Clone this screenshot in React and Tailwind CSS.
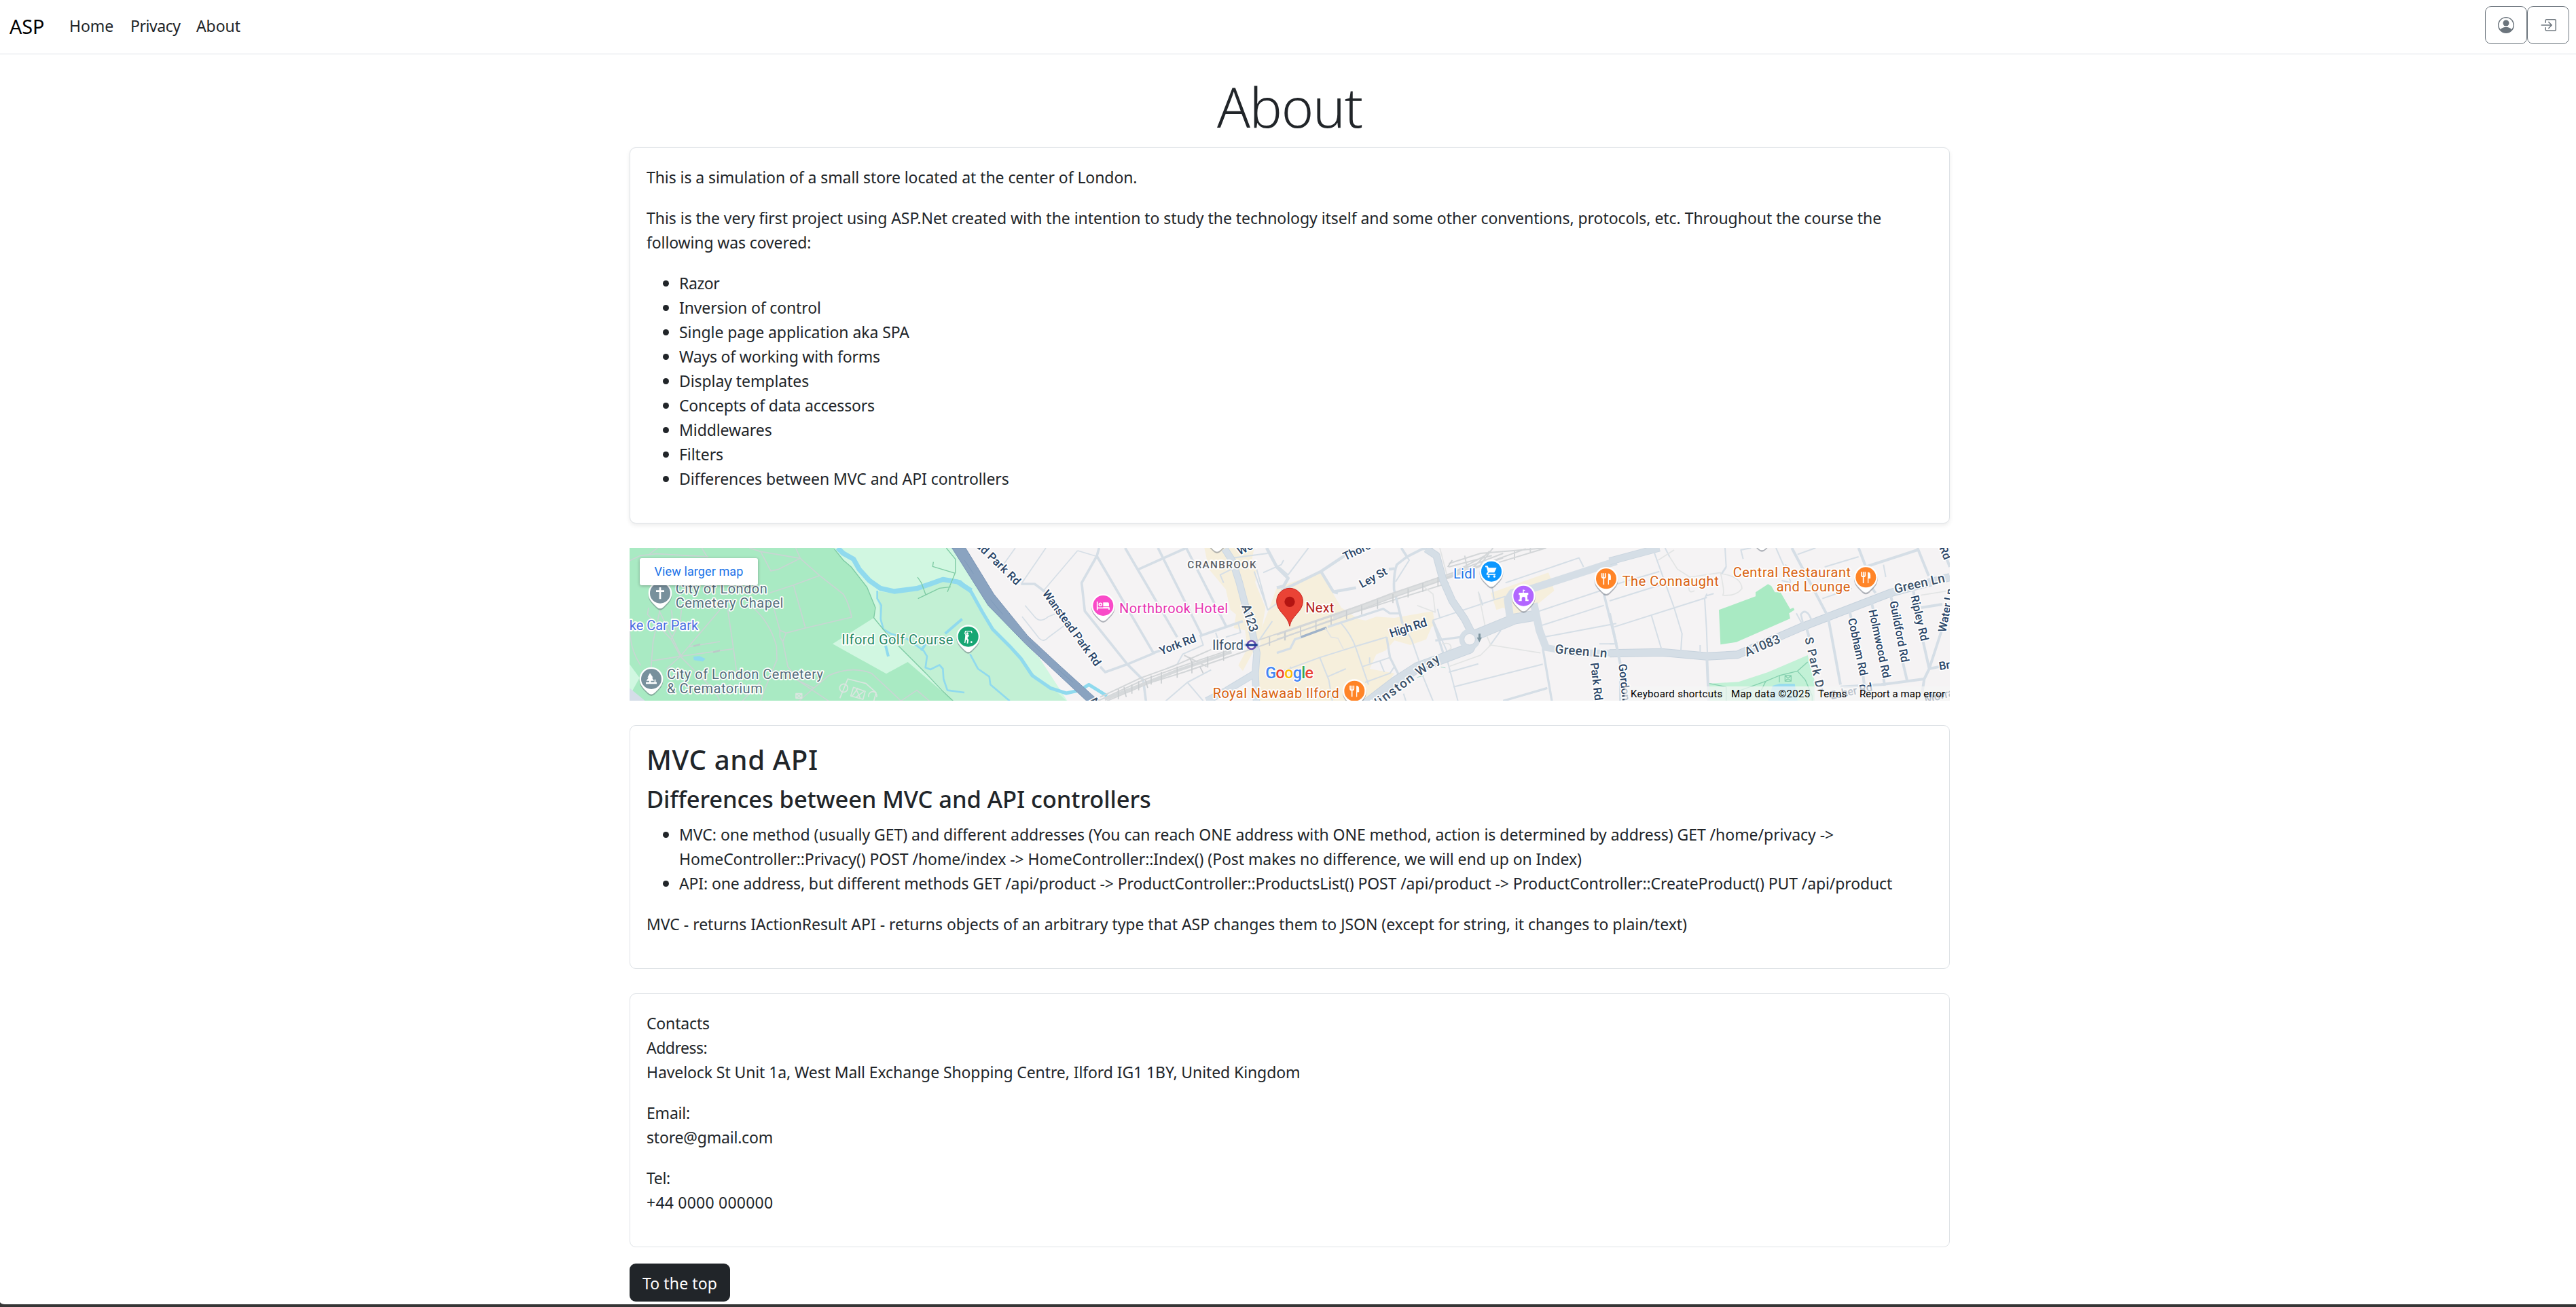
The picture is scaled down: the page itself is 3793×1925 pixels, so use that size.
import { BsPersonCircle, BsBoxArrowInRight } from "react-icons/bs";

const GLYPHS = {
  cross: <path d="M0-26V26M-18-9H18" stroke="#fff" strokeWidth="8" />,
  tree: <path d="M-6-26L8-6H3L12 8H-2V14H14V2H19V14H24V22H-24V14H-9V8H-22L-12-6H-17Z" fill="#fff" />,
  golf: (
    <g fill="none" stroke="#fff" strokeWidth="4">
      <path d="M16-16L14-24H-12L-15-14L-10-8" />
      <circle cx="-4" cy="-14" r="5" fill="#fff" stroke="none" />
      <path d="M-13-8L-1-10L4-4L-4 6L2 14L-1 30H-6L-5 17L-10 12L-13 28H-17L-14 4Z" fill="#fff" stroke="none" />
      <circle cx="14" cy="24" r="4" fill="#fff" stroke="none" />
    </g>
  ),
  bed: (
    <g fill="none" stroke="#fff" strokeWidth="5">
      <path d="M-26-18V20M-26 10H26V18" />
      <circle cx="-12" cy="-5" r="6" />
      <path d="M0-14H22Q26-14 26-6V10H0Z" fill="#fff" stroke="none" />
      <path d="M-22 5H26" stroke="#f743c8" strokeWidth="3" />
    </g>
  ),
  cart: (
    <g fill="#fff">
      <path d="M-27-25H-17L-12-16H23L13 5H-11L-15 10H18V15H-20Q-24 14-22 9L-16 2L-22-19H-27Z" />
      <circle cx="-12" cy="22" r="5" />
      <circle cx="13" cy="22" r="5" />
    </g>
  ),
  castle: (
    <path
      d="M-3-28L8-25L1-21V-14H21V-4H17V16H22V23H8V12Q8 4 0 4Q-8 4-8 12V23H-22V16H-17V-4H-21V-14H-3Z"
      fill="#fff"
    />
  ),
  food: (
    <g fill="none" stroke="#fff" strokeWidth="5">
      <path d="M-19-24V-10Q-19-3-11-3Q-3-3-3-10V-24M-11-24V26" />
      <path d="M10 26V-22Q19-22 19-10V4H10Z" fill="#fff" strokeWidth="3" />
    </g>
  ),
};

function Pin({ x, y, color, glyph }) {
  return (
    <g transform={`translate(${x} ${y})`}>
      <path d="M-52 2A52 52 0 1 1 52 2C52 28 36 42 16 62Q0 78-16 62C-36 42-52 28-52 2Z" fill="#5b6470" opacity=".45" transform="translate(0 5)" />
      <path d="M-52 0A52 52 0 1 1 52 0C52 26 36 40 16 60Q0 76-16 60C-36 40-52 26-52 0Z" fill="#fff" />
      <circle r="45" fill={color} />
      {GLYPHS[glyph]}
    </g>
  );
}

function Label({ x, y, w, color = "#2f4a68", size = 60, rotate = 0, weight = 400, anchor, children }) {
  return (
    <text
      transform={`translate(${x} ${y}) rotate(${rotate})`}
      fontFamily="Roboto, sans-serif"
      fontSize={size}
      fontWeight={weight}
      fill={color}
      stroke="#fff"
      strokeWidth="10"
      strokeLinejoin="round"
      paintOrder="stroke"
      textAnchor={anchor}
      textLength={w}
    >
      {children}
    </text>
  );
}

function Roads({ d, w = 9, color = "#d5dee6" }) {
  return <path d={d} fill="none" stroke={color} strokeWidth={w} strokeLinejoin="round" />;
}

function MapTerrain() {
  return (
    <>
      <rect width="5900" height="760" fill="#f5f3f4" />
      <path d="M0 0H1420L1500 110L1590 260L1740 430L1830 520L1960 720H0Z" fill="#d1f7e1" />
      <path d="M1115 228L1190 236L1290 225L1400 178L1470 186L1530 225L1560 300L1610 380L1700 470L1760 540L1830 620L1900 665L1960 720H1450L1400 665L1330 590L1170 430L1130 370Z" fill="#c2f0d4" />
      <path d="M0 0H925V40L965 90L1000 120L1070 210L1107 300L1100 345L918 460L1155 592L1250 540L1450 712H0Z" fill="#a9eac3" />
      <path d="M21 550L65 610L21 690Z" fill="#d1f7e1" />
      <path d="M21 655L90 712H21Z" fill="#d5dde8" />
      <path d="M303 516L330 514L356 526L345 538L305 532Z" fill="#90daee" />
      <Roads w={5} color="#c9d5d3" d="M21 92L70 70L140 62L370 75M110 62L145 36M550 36L600 52L775 82M600 52L645 138L680 130L775 82L755 36M775 82L860 158L745 200L640 235M745 200L798 390M860 158L965 240Q990 280 1002 342L798 390L712 412L685 400L655 290M560 295Q640 360 670 470L672 530L610 680L600 712M712 412L698 450L720 560L770 625L900 712M698 450L685 430V400M720 600L835 655L770 712M835 655L900 600Q1000 555 1090 590L1220 712L1290 665L1345 712M420 310L245 515L118 535L125 450L155 310M118 535L115 600M245 515L480 482L455 310M245 515L205 440L100 330L105 300M245 515L185 570M245 515L400 670L420 712M480 482L495 590M21 380Q20 480 70 555M250 310L245 360L205 440M205 310Q215 350 200 380M285 472L420 450M155 320L250 515M340 36L365 78M520 712L600 625" />
      <Roads w={8} color="#bbc9c8" d="M303 470L333 462M390 497L420 489" />
      <Roads w={5} color="#dbe5e0" d="M950 700L985 615L1065 635L1110 675L1100 712M985 655A18 18 0 1 1 949 655A18 18 0 1 1 985 655M1010 652L1062 670L1052 705L998 690ZM1020 655L1040 700M1030 655L1005 690M1055 670L1020 697M1112 695A18 18 0 1 0 1078 695M756 680H782V700H756ZM756 680L782 700M782 680L756 700" />
      <Roads w={22} color="#90daee" d="M940 36L965 60L1010 85L1035 130L1080 180L1130 215L1190 228L1290 215L1350 195L1405 175L1470 186L1530 225" />
      <Roads w={8} color="#90daee" d="M1115 225V260L1133 290L1130 350L1142 395L1175 415L1245 437L1285 465L1320 490L1335 515L1328 565L1350 573L1390 553L1405 570L1408 615L1425 665L1500 675M1525 505L1560 570L1610 605L1615 640L1700 712" />
      <Roads w={12} color="#90daee" d="M1152 468L1164 515M1310 490L1328 460M1415 415L1490 350" />
      <Roads w={15} color="#90daee" d="M1440 180L1480 185L1530 230L1580 320L1625 395L1700 470L1750 525L1800 600L1880 655L1950 678L2010 665L2050 640L2130 690" />
      <Roads w={4} color="#7dcaa3" d="M925 40L965 90L1000 120L1070 210L1107 300L1100 345L1170 430L1330 590L1400 665L1450 712M1420 36L1460 85V145L1425 230M1460 148L1360 118L1363 98M1440 208L1390 214L1295 260M1293 165L1310 190L1330 245" />
    </>
  );
}

function MapCentre() {
  return (
    <g transform="translate(1440 0)">
      <path d="M1120 36H1340L1330 90L1350 140L1345 190L1390 300L1365 440L1290 580L1270 555L1310 480L1300 400L1250 390L1260 330L1235 310L1215 220L1190 190L1140 130Z" fill="#f6efdc" />
      <path d="M1440 212L1640 140L1690 240L1725 300L1800 350L1950 380L2130 320L2140 380L1920 420L1850 570L1960 590L1870 712H1350L1370 400Z" fill="#f6efdc" />
      <Roads w={5} d="M285 36L225 120M420 36L315 190M560 48L640 72M560 48L405 230M328 290L370 340Q395 370 430 340L480 320M315 340L390 435Q410 455 430 432L500 380" />
      <Roads w={11} d="M310 195H370L430 240M655 36L645 72L578 190L592 315L780 550L850 620L862 712M645 72L895 500M770 36L1000 430M915 36L1108 420M1040 36L1215 380M830 130L1040 36M660 560L682 585L780 550L900 500M1100 425L1290 360M895 500L950 480" />
      <Roads w={6} d="M1100 420L1115 465L1025 505L1000 550L955 568M1170 410L1180 440M1270 370L1280 410L1215 430M1045 630L950 712M1045 630L1150 575M1045 630L1115 712M1240 130L1190 155L1205 190M1340 90L1400 310L1500 240M1420 360L1365 440M1340 140L1400 310M1245 80L1400 60M1380 145L1460 110L1470 90" />
      <Roads w={14} d="M1395 36L1440 120L1490 170L1470 205L1440 212" />
      <Roads w={32} color="#cbd7e2" d="M1210 40L1245 95L1275 190L1330 400L1352 500L1345 590L1350 712M1345 590L1220 665L1130 712" />
      <Roads w={26} color="#d7e0e8" d="M1210 40L1245 95L1275 190L1330 400L1352 500L1345 590L1350 712M1345 590L1220 665L1130 712" />
      <path d="M5 36H65L190 240L340 425L480 555L640 700L660 712H600L480 600L330 460L165 290Z" fill="#8aa3c0" stroke="#7893b4" strokeWidth="3" />
      <Roads w={3} color="#7f9bbb" d="M60 90L100 150M175 265L230 330M330 430L400 500M470 570L540 630" />
      <Roads w={6} color="#d3d6d8" d="M650 712L850 620L1000 565L1370 440L1720 320L2150 175M690 712L880 632L1030 585L1380 465L1720 340L2200 190M660 695L840 610L980 560L1150 485M1030 510L1130 560" />
      <Roads w={14} color="#d6d9db" d="M680 705L1000 578L1240 495" />
      <Roads w={5} color="#c9cdd0" d="M740 660V705M765 650L775 695M800 640V680M830 625V665M860 620L870 655M885 600V640M930 585V635M1000 560V610M1065 535V590M1135 515V565M1205 490V535M1408 430V468M1475 405V445M1055 520L1070 555M1100 560L1115 590" />
    </g>
  );
}

function MapEast() {
  return (
    <g transform="translate(2880 0)">
      <path d="M340 375L440 340L520 345L690 315V370L660 440L590 465L520 445L480 490L380 530Z" fill="#f6efdc" />
      <path d="M945 235L1200 145L1210 170L1225 225L1145 290L1050 330L1000 300L970 310Z" fill="#f6efdc" />
      <Roads w={13} d="M20 225L195 140L330 50M195 140L250 230L350 212M250 230L270 235M520 128L495 130" />
      <Roads w={11} d="M550 36L575 75L530 110Q515 150 518 220L555 370M575 75L640 42L690 36M1445 240L1500 460" />
      <Roads w={6} d="M575 75L585 90L525 185M140 36L50 155L10 120M555 370L595 440L628 535M285 370Q330 420 350 480L405 640M350 470L485 430M190 520L350 470M190 520L230 620L245 712M225 605L305 570M0 590L190 520M380 560L500 520M410 545L410 520M455 535L475 585M390 630L500 590L520 560M60 560L75 610M950 200L960 265L1010 250M960 265L690 355L720 440M690 355L755 500M890 230L910 290M710 305L720 345M990 400L940 470M780 650L1175 550M760 585L890 548M1010 190L1335 80L1355 120M1165 380L1445 290M1180 430L1500 370M1145 320L1430 225M1425 460H1500M1185 660L1000 712M755 540L800 712M640 590L690 712M560 680L570 712" />
      <Roads w={10} d="M485 430L500 520L545 610M690 360L735 500M1175 480L1215 712M1000 712L1195 655M0 500L60 480L80 440L110 430M225 385L470 305L500 325L540 325M700 445L810 430" />
      <Roads w={10} color="#9fb2c9" d="M107 430L220 388" />
      <Roads w={5} color="#e2e4e4" d="M215 390L240 430L270 435L295 485M620 290L700 320L690 240L640 200M890 230L930 430L945 465L1165 500M760 560L900 510L945 465M720 36L750 150M730 460Q770 450 770 480L745 500" />
      <Roads w={14} color="#dcdedf" d="M250 345L500 250L770 157L860 125" />
      <Roads w={6} color="#d3d6d8" d="M760 105L900 60L1190 36M760 120L950 70M740 170L1100 40M770 150L920 70M840 150L940 50M830 70L840 120M955 36L900 110M980 100L1190 36M0 440L250 355L500 260L770 165L1000 80M0 420L250 335L500 240L770 148L1000 60M1120 36V60M1050 50V90" />
      <Roads w={5} color="#c9cdd0" d="M37 405V445M105 383V423M173 358V398M240 335V375M308 312V352M375 290V330M445 265V305M513 240V280M580 215V255M645 190V230M712 165V205M775 90L755 120" />
      <Roads w={48} color="#cad5df" d="M390 730L520 630L620 565L730 525L850 480L880 420L1050 350L1140 335" />
      <Roads w={42} d="M390 730L520 630L620 565L730 525L850 480L880 420L1050 350L1140 335" />
      <Roads w={34} color="#cad5df" d="M660 40L705 70L735 180L775 270L830 350L860 410" />
      <Roads w={28} d="M660 40L705 70L735 180L775 270L830 350L860 410" />
      <Roads w={34} d="M1030 340L1020 265L1040 235L1130 215L1500 95M1135 280L1160 400L1190 480" />
      <Roads w={30} d="M1180 475L1330 500H1500" />
      <circle cx="852" cy="440" r="46" fill="#d5dee6" />
      <circle cx="852" cy="440" r="25" fill="#f5f3f4" stroke="#cad5df" strokeWidth="3" />
      <path d="M891 415H900V432H906L895 453L884 432H891Z" fill="#7d949f" />
      <Roads w={3} color="#a5d8cb" d="M725 562L745 566M620 608L650 600" />
    </g>
  );
}

function MapFarEast() {
  return (
    <g transform="translate(4350 0)">
      <path d="M483 310L645 250V232L700 196L715 205L730 232H755L798 306L812 300L817 310L793 325L798 348L560 452L490 463Z" fill="#a9eac3" />
      <path d="M438 635L570 628L700 585L875 510L905 620V712H440Z" fill="#c2f1d6" />
      <path d="M720 645L750 636H818L830 712H700Z" fill="#98dcee" />
      <Roads w={4} color="#84d0ae" d="M440 635L515 650V712M550 675L690 625L750 600L830 580L875 540M830 580L865 620L895 690V712M750 600V630M690 625L670 665M775 600H802V625H775ZM775 600L802 625M802 600L775 625" />
      <Roads w={33} color="#cad5df" d="M0 95L220 36" />
      <Roads w={28} d="M0 95L220 36" />
      <Roads w={36} color="#c6d2dd" d="M0 502L230 497L430 515L565 508L850 385L1240 235L1503 165" />
      <Roads w={30} d="M0 502L230 497L430 515L565 508L850 385L1240 235L1503 165" />
      <Roads w={12} d="M0 325L48 550V712M430 525L438 712M805 36L965 340L1020 640M870 390L890 460M1100 36L1130 115M1175 235L1160 215M1130 120L1360 45M1360 36L1410 160M1155 270L1165 310M1240 240L1250 280M1060 315L1068 350M1295 540L1315 625L1390 615M1020 650L1200 640L1390 615L1412 570L1385 450M1412 570L1480 360M1412 570L1460 560M1375 300L1470 285M1340 215L1345 245M1390 615L1380 680M1120 600L1125 640M1210 610L1215 645M1480 60L1503 120" />
      <Roads w={6} d="M195 50L285 300L320 415L315 490M245 36L265 75M20 385L430 255M0 270L240 195M430 238L420 260L428 390L432 500M460 238L425 248M185 335L230 485M0 205L220 140M400 465V500M0 460H20M510 36L515 120M590 85L580 45L625 36M735 36L800 185M760 180L800 190M830 65L910 36M940 260L1070 215M950 120L1100 75M1210 110L1220 165M825 325L855 380M775 110L790 120" />
      <Roads w={5} color="#e2e4e4" d="M215 90L285 45M265 75L300 130L355 165L490 145Q510 235 500 245Q560 250 585 215Q580 160 490 150M350 210Q350 240 375 225M1375 245L1500 225" />
      <Roads w={8} d="M515 120L495 150M855 370L845 330Q860 305 880 330L893 355" />
    </g>
  );
}

function MapLabels() {
  const road = "#284467";
  return (
    <>
      <Pin x="156" y="236" color="#78909c" glyph="cross" />
      <Label x="224" y="238" w="405" color="#546e7a">City of London</Label>
      <Label x="224" y="300" w="476" color="#546e7a">Cemetery Chapel</Label>
      <Label x="324" y="400" anchor="end" color="#4a6ee0">Lake Car Park</Label>
      <Pin x="117" y="615" color="#78909c" glyph="tree" />
      <Label x="186" y="615" w="690" color="#546e7a">City of London Cemetery</Label>
      <Label x="186" y="678" w="422" color="#546e7a">&amp; Crematorium</Label>
      <Label x="958" y="461" w="492" color="#268a66">Ilford Golf Course</Label>
      <Pin x="1517" y="428" color="#17a673" glyph="golf" />
      <g transform="translate(1440 0)">
        <Label x="56" y="-22" rotate="44" size="50" weight="500" w="324" color={road}>stead Park Rd</Label>
        <Label x="403" y="238" rotate="54" size="50" weight="500" w="400" color={road}>Wanstead Park Rd</Label>
        <Pin x="673" y="291" color="#f94ac8" glyph="bed" />
        <Label x="744" y="323" w="480" color="#e633b0">Northbrook Hotel</Label>
        <Pin x="1176" y="-15" color="#ff8427" glyph="food" />
        <Label x="1045" y="125" w="304" size="46" weight="500" color="#5b6066">CRANBROOK</Label>
        <Label x="1275" y="68" rotate="-25" size="50" weight="500" color={road}>Woodlands</Label>
        <Label x="1284" y="292" rotate="72" size="56" weight="500" w="125" color="#3a5068">A123</Label>
        <Label x="930" y="509" rotate="-21" size="50" weight="500" w="168" color={road}>York Rd</Label>
        <Label x="1155" y="487" w="138" color="#3d5268">Ilford</Label>
        <circle cx="1328" cy="465" r="18" fill="#fff" stroke="#6b4fb0" strokeWidth="8" />
        <rect x="1302" y="460" width="53" height="10" fill="#1e3f94" />
        <Label x="606" y="716" rotate="42" size="56" weight="500" color="#3a5068">A406</Label>
        <Label x="1157" y="698" w="558" color="#d8620f">Royal Nawaab Ilford</Label>
      </g>
      <g transform="translate(2880 0)">
        <path d="M57 382C50 335-1 318-1 272A58 58 0 0 1 115 272C115 318 64 335 57 382Z" fill="#ea4335" stroke="#c5221f" strokeWidth="3" />
        <circle cx="57" cy="274" r="23" fill="#b31412" />
        <Label x="127" y="320" w="126" color="#b3221c">Next</Label>
        <Label x="302" y="92" rotate="-25" size="50" weight="500" color={road}>Thorold Rd</Label>
        <Label x="376" y="214" rotate="-29" size="50" weight="500" w="132" color={road}>Ley St</Label>
        <Label x="505" y="432" rotate="-18" size="52" weight="500" w="170" color={road}>High Rd</Label>
        <Label x="420" y="760" rotate="-36.5" size="56" weight="500" w="378" color="#3a5068">Winston Way</Label>
        <Label x="780" y="172" w="98" color="#1a73e8">Lidl</Label>
        <Pin x="948" y="140" color="#0c97ff" glyph="cart" />
        <Pin x="1090" y="248" color="#b266ff" glyph="castle" />
        <Pin x="343" y="668" color="#ff8427" glyph="food" />
        <Pin x="1455" y="172" color="#ff8427" glyph="food" />
        <Label x="1228" y="501" rotate="5" size="56" weight="500" w="230" color="#3a5068">Green Ln</Label>
        <Label x="1385" y="545" rotate="83" size="50" weight="500" w="168" color={road}>Park Rd</Label>
        <g fontFamily="Roboto, sans-serif" fontSize="70" fontWeight="500" stroke="#fff" strokeWidth="8" paintOrder="stroke">
          <text x="-50" y="613" textLength="212">
            <tspan fill="#4285f4">G</tspan>
            <tspan fill="#ea4335">o</tspan>
            <tspan fill="#fbbc04">o</tspan>
            <tspan fill="#4285f4">g</tspan>
            <tspan fill="#34a853">l</tspan>
            <tspan fill="#ea4335">e</tspan>
          </text>
        </g>
      </g>
      <g transform="translate(4350 0)">
        <Label x="56" y="203" w="426" color="#d8620f">The Connaught</Label>
        <Pin x="673" y="-22" color="#ff8427" glyph="food" />
        <Label x="545" y="164" w="520" color="#d8620f">Central Restaurant</Label>
        <Label x="737" y="228" w="326" color="#d8620f">and Lounge</Label>
        <Pin x="1132" y="166" color="#ff8427" glyph="food" />
        <Label x="1262" y="237" rotate="-13" size="56" weight="500" w="228" color="#3a5068">Green Ln</Label>
        <Label x="606" y="517" rotate="-23" size="56" weight="500" w="165" color="#3a5068">A1083</Label>
        <Label x="862" y="435" rotate="77" size="52" weight="500" w="250" color="#3a5068">S Park Dr</Label>
        <Label x="40" y="550" rotate="84" size="50" weight="500" color={road}>Gordon Rd</Label>
        <Label x="1053" y="350" rotate="78" size="50" weight="500" w="258" color={road}>Cobham Rd</Label>
        <Label x="1144" y="312" rotate="78" size="50" weight="500" w="308" color={road}>Holmwood Rd</Label>
        <Label x="1237" y="274" rotate="79" size="50" weight="500" w="275" color={road}>Guildford Rd</Label>
        <Label x="1330" y="250" rotate="77" size="50" weight="500" w="205" color={road}>Ripley Rd</Label>
        <Label x="1485" y="410" rotate="-79" size="50" weight="500" w="195" color={road}>Water Ln</Label>
        <Label x="1456" y="36" rotate="68" size="50" weight="500" color={road}>Rd</Label>
        <Label x="1458" y="576" rotate="-10" size="50" weight="500" color={road}>Broadway</Label>
        <Label x="978" y="706" rotate="-12" size="50" weight="500" w="190" color={road}>Esher Rd</Label>
        <Label x="1395" y="722" rotate="-14" size="50" weight="500" color={road}>Morrab</Label>
      </g>
    </>
  );
}

function StoreMap() {
  return (
    <div className="relative mt-[36px] h-[225px] w-full overflow-hidden bg-[#f5f3f4] font-[Roboto,sans-serif]">
      <svg className="block h-[225px] w-[1944px]" viewBox="21 36 5832 675" preserveAspectRatio="none">
        <MapTerrain />
        <MapCentre />
        <MapEast />
        <MapFarEast />
        <MapLabels />
      </svg>
      <a className="absolute top-[15px] left-[15px] flex h-[40px] w-[174px] items-center justify-center rounded-[3px] bg-white text-[18px] tracking-[0.1px] text-[#1a73e8] shadow-[0_1px_4px_rgba(0,0,0,0.3)]">
        View larger map
      </a>
      <div className="absolute right-0 bottom-0 flex h-[21px] items-center gap-[19px] bg-[#f5f5f5]/70 pr-[8px] pl-[9px] text-[15px] tracking-[0.3px] whitespace-nowrap text-black">
        <span className="w-[129px]">Keyboard shortcuts</span>
        <span className="w-[109px]">Map data ©2025</span>
        <span className="w-[42px] tracking-normal">Terms</span>
        <span className="w-[125px] tracking-[0.05px]">Report a map error</span>
      </div>
    </div>
  );
}

function Card({ className = "", children }) {
  return (
    <section className={`rounded-[9px] border border-[#dee2e6] bg-white px-[24px] pt-[24px] pb-[24px] ${className}`}>
      {children}
    </section>
  );
}

function Item({ className = "", children }) {
  return (
    <li
      className={`before:mr-[15px] before:-ml-[24px] before:inline-block before:h-[9px] before:w-[9px] before:rounded-full before:bg-[#212529] before:align-[4px] before:leading-none before:content-[''] ${className}`}
    >
      {children}
    </li>
  );
}

export default function App() {
  return (
    <div className="flex h-[1925px] w-[3793px] flex-col overflow-hidden bg-white font-['Noto_Sans',sans-serif] text-[23px] leading-[36px] tracking-[-0.08px] whitespace-nowrap text-[#212529]">
      <header className="flex h-[80px] shrink-0 items-start justify-between border-b border-[#dee2e6] pr-[10px] pl-[14px]">
        <nav className="flex items-baseline pt-[16px]">
          <a className="w-[88px] text-[28.75px] leading-[45px] text-black">ASP</a>
          <div className="relative -top-[3px] flex">
            <a className="w-[90px]">Home</a>
            <a className="w-[97px] tracking-[-0.45px]">Privacy</a>
            <a>About</a>
          </div>
        </nav>
        <div className="flex pt-[9px]">
          <button className="flex h-[56px] w-[62px] items-center justify-center rounded-[9px] border border-[#6c757d] text-[#6c757d]">
            <BsPersonCircle size={24} />
          </button>
          <button className="flex h-[56px] w-[62px] items-center justify-center rounded-[9px] border border-[#6c757d] text-[#6c757d]">
            <BsBoxArrowInRight size={24} />
          </button>
        </div>
      </header>

      <main className="ml-[927px] flex w-[1944px] flex-1 flex-col">
        <h1 className="mt-[21px] mb-[3px] h-[113px] text-center text-[80.5px] leading-[112px] font-light tracking-[-1.2px]">About</h1>

        <Card className="h-[554px] shadow-[0_3px_6px_rgba(0,0,0,0.075)]">
          <div className="pt-px">
            <p className="mb-[24px]">This is a simulation of a small store located at the center of London.</p>
            <p className="tracking-[-0.04px]">
              This is the very first project using ASP.Net created with the intention to study the technology itself and some other conventions, protocols, etc. Throughout the course the
            </p>
            <p className="mb-[24px] tracking-[-0.12px]">following was covered:</p>
            <ul className="pl-[48px]">
              <Item className="tracking-[-0.4px]">Razor</Item>
              <Item className="tracking-[-0.13px]">Inversion of control</Item>
              <Item>Single page application aka SPA</Item>
              <Item className="tracking-[-0.19px]">Ways of working with forms</Item>
              <Item>Display templates</Item>
              <Item className="tracking-[-0.18px]">Concepts of data accessors</Item>
              <Item>Middlewares</Item>
              <Item>Filters</Item>
              <Item className="tracking-[-0.07px]">Differences between MVC and API controllers</Item>
            </ul>
          </div>
        </Card>

        <StoreMap />

        <Card className="mt-[36px] h-[359px]">
          <h3 className="mb-[11px] pt-px text-[40.25px] leading-[50.4px] font-medium tracking-[0.6px]">MVC and API</h3>
          <h4 className="mb-[12px] text-[34.5px] leading-[43.2px] font-medium tracking-[-0.1px]">
            Differences between MVC and API controllers
          </h4>
          <ul className="mb-[24px] pl-[48px]">
            <Item className="tracking-[-0.042px]">
              MVC: one method (usually GET) and different addresses (You can reach ONE address with ONE method, action is determined by address) GET /home/privacy -&gt;
              <br />
              <span className="tracking-[-0.076px]">
                HomeController::Privacy() POST /home/index -&gt; HomeController::Index() (Post makes no difference, we will end up on Index)
              </span>
            </Item>
            <Item className="tracking-[-0.119px]">
              API: one address, but different methods GET /api/product -&gt; ProductController::ProductsList() POST /api/product -&gt; ProductController::CreateProduct() PUT /api/product
            </Item>
          </ul>
          <p className="tracking-[-0.03px]">
            MVC - returns IActionResult API - returns objects of an arbitrary type that ASP changes them to JSON (except for string, it changes to plain/text)
          </p>
        </Card>

        <Card className="mt-[36px] h-[374px]">
          <div className="pt-px">
            <p className="tracking-[-0.17px]">Contacts</p>
            <p className="tracking-[-0.5px]">Address:</p>
            <p className="mb-[24px] tracking-[-0.1px]">Havelock St Unit 1a, West Mall Exchange Shopping Centre, Ilford IG1 1BY, United Kingdom</p>
            <p className="tracking-[-0.2px]">Email:</p>
            <p className="mb-[24px] tracking-[-0.2px]">store@gmail.com</p>
            <p className="tracking-[-0.36px]">Tel:</p>
            <p className="tracking-[0.22px]">+44 0000 000000</p>
          </div>
        </Card>

        <button className="mt-[24px] h-[56px] w-[148px] shrink-0 rounded-[9px] bg-[#212529] pt-px tracking-[0.13px] text-white">
          To the top
        </button>
      </main>

      <footer className="flex h-[7px] shrink-0 flex-col justify-end">
        <svg className="block h-[3px] w-[7px]" viewBox="0 0 7 3">
          <path d="M0 0Q2 3 7 3H0Z" fill="#363636" />
        </svg>
        <div className="h-[4px] bg-[#363636]" />
      </footer>
    </div>
  );
}
